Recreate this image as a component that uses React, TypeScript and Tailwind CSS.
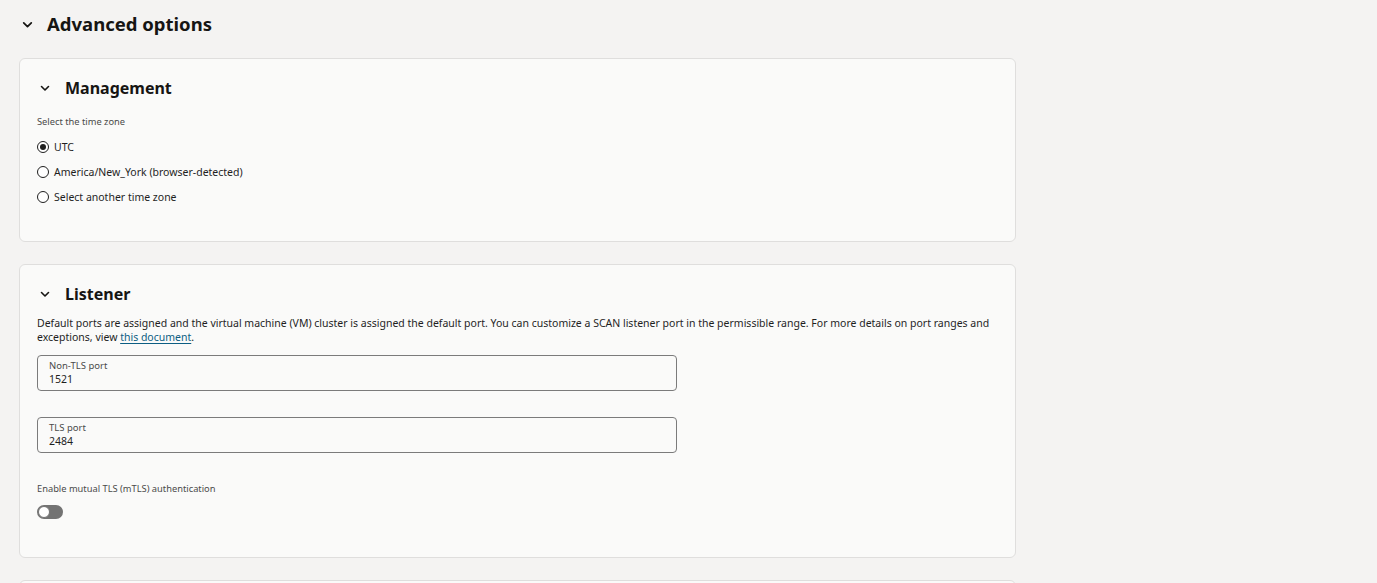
import React, { useState } from 'react';

const Chevron: React.FC<{ className?: string }> = ({ className }) => (
  <svg viewBox="0 0 12 12" className={className} fill="none" stroke="currentColor" strokeWidth={1.6} strokeLinecap="round" strokeLinejoin="round">
    <path d="M2.5 4.5 L6 8 L9.5 4.5" />
  </svg>
);

const Radio: React.FC<{ label: string; checked: boolean; onSelect: () => void }> = ({ label, checked, onSelect }) => (
  <label className="flex items-center gap-[5px] h-[25px] cursor-pointer" onClick={onSelect}>
    <span className="w-[12px] h-[12px] rounded-full border border-[#1f1f1f] flex items-center justify-center bg-white">
      {checked && <span className="w-[6px] h-[6px] rounded-full bg-[#1f1f1f]" />}
    </span>
    <span className="text-[10.5px] text-[#1f1f1f]">{label}</span>
  </label>
);

const PortField: React.FC<{ label: string; value: string; onChange: (v: string) => void }> = ({ label, value, onChange }) => (
  <div className="w-[640px] h-[36px] border border-[#7b7b7b] rounded-[4px] px-[11px] pt-[3px] flex flex-col bg-[#fafaf9]">
    <span className="text-[9.5px] leading-[13px] text-[#4a4a4a]">{label}</span>
    <input
      value={value}
      onChange={(e) => onChange(e.target.value)}
      className="text-[10.5px] leading-[15px] text-[#1f1f1f] bg-transparent outline-none"
    />
  </div>
);

const App: React.FC = () => {
  const [zone, setZone] = useState('utc');
  const [nonTls, setNonTls] = useState('1521');
  const [tls, setTls] = useState('2484');
  const [mtls, setMtls] = useState(false);

  return (
    <div className="min-h-[583px] bg-[#f4f3f2] px-[19px] pt-[10px] pb-[40px] text-[#161513]" style={{ fontFamily: '"Noto Sans", "Open Sans", sans-serif' }}>
      {/* Section title */}
      <div className="flex items-center h-[28px] mb-[20px]">
        <Chevron className="w-[13px] h-[13px] ml-[2px] mr-[13px] text-[#161513]" />
        <h1 className="text-[18.5px] font-bold">Advanced options</h1>
      </div>

      <div className="w-[997px] flex flex-col gap-[22px]">
        {/* Management */}
        <section className="bg-[#fafaf9] border border-[#dfdedd] rounded-[6px] px-[17px] pt-[16px] pb-[31px]">
          <div className="flex items-center h-[26px] mb-[14px]">
            <Chevron className="w-[12px] h-[12px] ml-[2px] mr-[14px]" />
            <h2 className="text-[16px] font-bold">Management</h2>
          </div>
          <div className="text-[9.3px] text-[#4a4a4a] mb-[6px]">Select the time zone</div>
          <Radio label="UTC" checked={zone === 'utc'} onSelect={() => setZone('utc')} />
          <Radio label="America/New_York (browser-detected)" checked={zone === 'ny'} onSelect={() => setZone('ny')} />
          <Radio label="Select another time zone" checked={zone === 'other'} onSelect={() => setZone('other')} />
        </section>

        {/* Listener */}
        <section className="bg-[#fafaf9] border border-[#dfdedd] rounded-[6px] px-[17px] pt-[16px] pb-[38px]">
          <div className="flex items-center h-[26px] mb-[9px]">
            <Chevron className="w-[12px] h-[12px] ml-[2px] mr-[14px]" />
            <h2 className="text-[16px] font-bold">Listener</h2>
          </div>
          <p className="text-[10.5px] leading-[14px] text-[#1f1f1f] mb-[11px]">
            Default ports are assigned and the virtual machine (VM) cluster is assigned the default port. You can customize a SCAN listener port in the permissible range. For more details on port ranges and exceptions, view{' '}
            <a href="#" className="text-[#0d5e83] underline underline-offset-2">this document</a>.
          </p>
          <PortField label="Non-TLS port" value={nonTls} onChange={setNonTls} />
          <div className="h-[26px]" />
          <PortField label="TLS port" value={tls} onChange={setTls} />
          <div className="text-[9.3px] text-[#4a4a4a] mt-[29px] mb-[9px]">Enable mutual TLS (mTLS) authentication</div>
          <button
            onClick={() => setMtls(!mtls)}
            className={`w-[26px] h-[14px] rounded-full flex items-center px-[1px] ${mtls ? 'bg-[#227e9e] justify-end' : 'bg-[#737373] justify-start'}`}
          >
            <span className="w-[12px] h-[12px] rounded-full bg-white border border-[#737373]" />
          </button>
        </section>

        <section className="bg-[#fafaf9] border border-[#dfdedd] rounded-[6px] h-[60px]" />
      </div>
    </div>
  );
};

export default App;
